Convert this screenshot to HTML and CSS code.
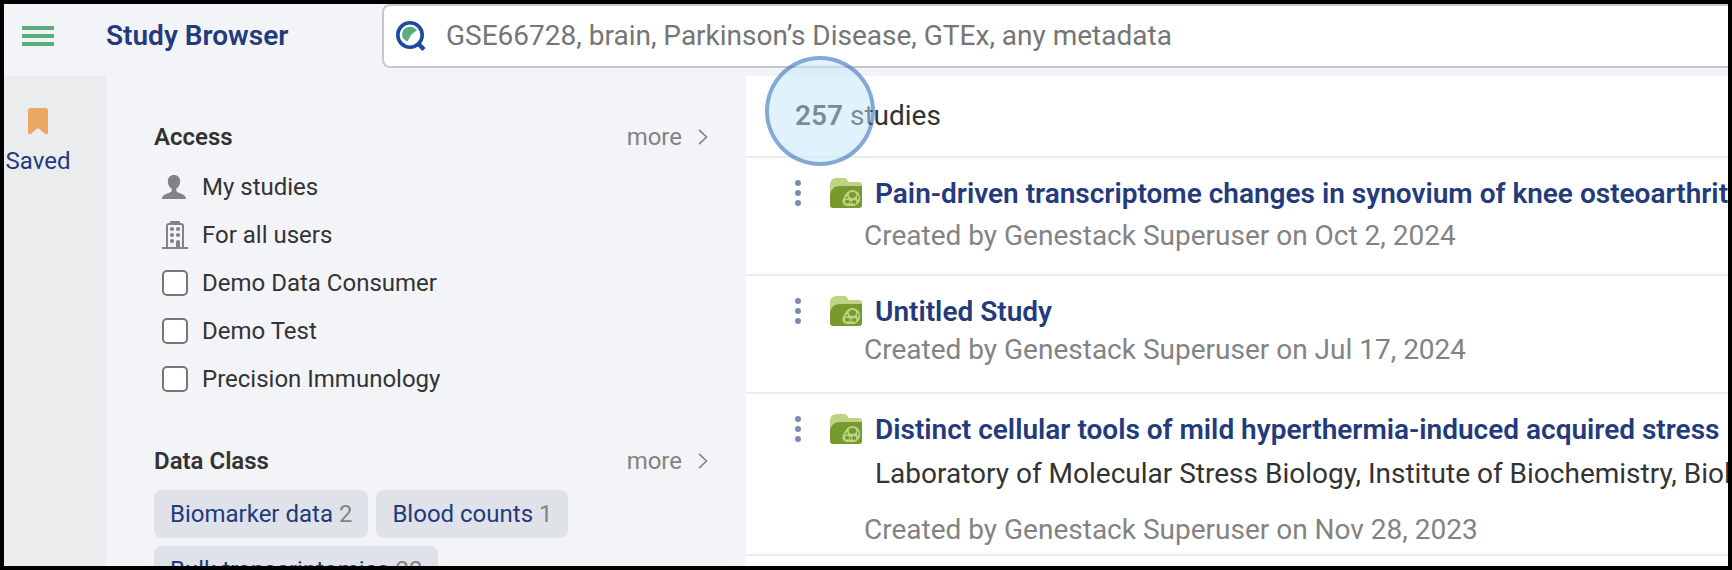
FILE: index.html
```html
<!DOCTYPE html>
<html lang="en">
<head>
<meta charset="utf-8">
<title>Study Browser</title>
<link rel="stylesheet" href="styles.css">
</head>
<body>
<svg class="sprite" aria-hidden="true">
  <symbol id="folder" viewBox="0 0 32 30">
    <path fill="#bdd583" d="M0 6a6 6 0 0 1 6-6h8c2 0 3 1 4 3 .5 .8 1 1 2 1h9a3 3 0 0 1 3 3v18H0z"/>
    <path fill="#769a2e" d="M0 18C0 12 4 8 10 8h22v19a3 3 0 0 1-3 3H3a3 3 0 0 1-3-3z"/>
    <path fill="#bdd583" d="M22.500 12c4.500 0 7.700 3.600 7.700 8.200 0 4.600-3.400 7.800-8 7.800h-4c-3.600 0-5.800-2-5.800-4.800 0-2.200 1.300-3.200 2.300-5.200 1.400-3.200 4-6 7.800-6z"/>
    <ellipse fill="#769a2e" cx="22.500" cy="17" rx="3.700" ry="2.900"/>
    <ellipse fill="#769a2e" cx="17.200" cy="23.700" rx="2.200" ry="1.900"/>
    <ellipse fill="#769a2e" cx="24.200" cy="24" rx="2.200" ry="2"/>
    <path fill="none" stroke="#769a2e" stroke-width="1.500" stroke-linecap="round" d="M27.800 18v3M16.200 20.300l1-1.200M20.600 23.500v1.500"/>
  </symbol>
  <symbol id="dots" viewBox="0 0 6 26">
    <g fill="#7b8bb5"><circle cx="3" cy="3" r="3"/><circle cx="3" cy="13" r="3"/><circle cx="3" cy="23" r="3"/></g>
  </symbol>
  <symbol id="chevron" viewBox="0 0 10 16">
    <path fill="none" stroke="#838383" stroke-width="1.600" d="M1 .8l7.500 7.200L1 15.200"/>
  </symbol>
</svg>
<div class="app">
  <header class="header">
    <button class="menu" type="button" aria-label="Menu">
      <svg width="32" height="20" viewBox="0 0 32 20"><path fill="#5dac80" d="M0 0h32v4H0zM0 8h32v4H0zM0 16h32v4H0z"/></svg>
    </button>
    <h1 class="brand">Study Browser</h1>
    <label class="search">
      <svg width="30" height="31" viewBox="0 0 30 31" aria-hidden="true">
        <circle cx="14" cy="14" r="12.200" fill="#fff" stroke="#1d4b9d" stroke-width="3.600"/>
        <path d="M23 23.500l5 5" stroke="#1d4b9d" stroke-width="4.400"/>
        <path fill="#5dac80" d="M20.800 9.600c-2.600 1.700-4.800 3.200-6.300 5.400-1 1.600-1.400 3.600-3.200 5.200C7.600 19 5.800 15.600 6.200 12.400 7 7.600 11 5.600 14.600 5.800c2.800.2 5 1.600 6.200 3.800z"/>
      </svg>
      <input class="search-input" type="text" aria-label="Search studies" placeholder="GSE66728, brain, Parkinson’s Disease, GTEx, any metadata">
    </label>
  </header>
  <div class="content">
    <nav class="rail">
      <a class="saved" href="#saved">
        <svg width="20" height="27" viewBox="0 0 20 27" aria-hidden="true"><path fill="#e9a962" d="M3 0h14a3 3 0 0 1 3 3v21.500c0 1.600-1.600 2.300-3 1.300L10 20l-7 5.800c-1.400 1-3 .3-3-1.300V3a3 3 0 0 1 3-3z"/></svg>
        Saved
      </a>
    </nav>
    <aside class="filters">
      <section class="filter">
        <div class="filter-head">
          <h2 class="filter-title">Access</h2>
          <button class="more" type="button">more <svg width="10" height="16"><use href="#chevron"/></svg></button>
        </div>
        <ul class="options">
          <li><button class="option" type="button">
            <span class="option-icon"><svg width="24" height="24" viewBox="0 0 24 24"><path fill="#838383" d="M12 0c3.800 0 6.200 2.600 6.200 6.400 0 3-1.600 6-3.800 7.200v2.200c0 1.200 1 1.500 3 2.200 3.600 1.200 6.600 2.600 6.600 6H0c0-3.400 3-4.800 6.600-6 2-.7 3-1 3-2.200v-2.200C7.400 12.400 5.800 9.400 5.800 6.400 5.800 2.600 8.200 0 12 0z"/></svg></span>
            My studies</button></li>
          <li><button class="option" type="button">
            <span class="option-icon"><svg width="26" height="28" viewBox="0 0 26 28"><path fill="none" stroke="#838383" stroke-width="2" d="M0 27h26M5 27V5a2 2 0 0 1 2-2h12a2 2 0 0 1 2 2v22"/><path fill="#838383" d="M9 0h8a1 1 0 0 1 1 1v3H8V1a1 1 0 0 1 1-1zM14 21a2 2 0 0 1 4 0v6h-4z"/><g fill="#838383"><circle cx="10" cy="8" r="2.100"/><circle cx="16" cy="8" r="2.100"/><circle cx="10" cy="14" r="2.100"/><circle cx="16" cy="14" r="2.100"/><circle cx="10" cy="20" r="2.100"/></g></svg></span>
            For all users</button></li>
          <li><label class="option"><input class="check" type="checkbox">Demo Data Consumer</label></li>
          <li><label class="option"><input class="check" type="checkbox">Demo Test</label></li>
          <li><label class="option"><input class="check" type="checkbox">Precision Immunology</label></li>
        </ul>
      </section>
      <section class="filter">
        <div class="filter-head">
          <h2 class="filter-title">Data Class</h2>
          <button class="more" type="button">more <svg width="10" height="16"><use href="#chevron"/></svg></button>
        </div>
        <div class="chips">
          <button class="chip" type="button">Biomarker data <span class="chip-count">2</span></button>
          <button class="chip" type="button">Blood counts <span class="chip-count">1</span></button>
          <button class="chip" type="button">Bulk transcriptomics <span class="chip-count">22</span></button>
        </div>
      </section>
    </aside>
    <main class="results">
      <p class="total"><b>257</b> studies<span class="pointer"></span></p>
      <article class="study">
        <button class="study-menu" type="button" aria-label="Study actions"><svg width="6" height="26"><use href="#dots"/></svg></button>
        <svg class="study-icon" width="32" height="30"><use href="#folder"/></svg>
        <div class="study-body">
          <a class="study-title" href="#study-1">Pain-driven transcriptome changes in synovium of knee osteoarthritis</a>
          <p class="study-meta loose">Created by Genestack Superuser on Oct 2, 2024</p>
        </div>
      </article>
      <article class="study">
        <button class="study-menu" type="button" aria-label="Study actions"><svg width="6" height="26"><use href="#dots"/></svg></button>
        <svg class="study-icon" width="32" height="30"><use href="#folder"/></svg>
        <div class="study-body">
          <a class="study-title" href="#study-2">Untitled Study</a>
          <p class="study-meta">Created by Genestack Superuser on Jul 17, 2024</p>
        </div>
      </article>
      <article class="study">
        <button class="study-menu" type="button" aria-label="Study actions"><svg width="6" height="26"><use href="#dots"/></svg></button>
        <svg class="study-icon" width="32" height="30"><use href="#folder"/></svg>
        <div class="study-body">
          <a class="study-title" href="#study-3">Distinct cellular tools of mild hyperthermia-induced acquired stress</a>
          <p class="study-lab">Laboratory of Molecular Stress Biology, Institute of Biochemistry, Biological</p>
          <p class="study-meta">Created by Genestack Superuser on Nov 28, 2023</p>
        </div>
      </article>
    </main>
  </div>
</div>
</body>
</html>
```
FILE: styles.css
```css
* {
  box-sizing: border-box;
}

body,
h1,
h2,
p,
ul {
  margin: 0;
  padding: 0;
}

body {
  font-family: Roboto, "Liberation Sans", sans-serif;
  font-size: 28px;
  line-height: 32px;
  color: #333;
}

button {
  border: 0;
  padding: 0;
  background: none;
  color: inherit;
  font: inherit;
}

a {
  text-decoration: none;
}

svg {
  display: block;
  flex: none;
}

.sprite {
  position: absolute;
  width: 0;
  height: 0;
}

.app {
  display: flex;
  flex-direction: column;
  height: 100vh;
  overflow: hidden;
  border: 4px solid #000;
  background: #f3f4f7;
}

/* Header */

.header {
  display: flex;
  align-items: center;
  flex: none;
  padding-bottom: 8px;
}

.menu {
  width: 102px;
  padding-left: 18px;
}

.brand {
  width: 276px;
  font-size: 28px;
  font-weight: 600;
  color: #233a7c;
}

.search {
  display: flex;
  flex: 1;
  align-items: center;
  gap: 20px;
  height: 64px;
  padding-left: 12px;
  border: 2px solid #c5c7d0;
  border-right: 0;
  border-radius: 8px 0 0 8px;
  background: #fff;
}

.search-input {
  flex: 1;
  min-width: 0;
  border: 0;
  padding: 0;
  outline: 0;
  background: none;
  font: inherit;
}

.search-input::placeholder {
  color: #757575;
  opacity: 1;
}

/* Columns */

.content {
  display: flex;
  flex: 1;
  min-height: 0;
}

.rail {
  flex: none;
  width: 102px;
  padding: 32px 0 0 2px;
  background: #ebecee;
}

.saved {
  display: flex;
  flex-direction: column;
  align-items: center;
  gap: 12px;
  width: 64px;
  font-size: 24px;
  line-height: 28px;
  color: #233a7c;
}

/* Filters */

.filters {
  display: flex;
  flex: none;
  flex-direction: column;
  gap: 44px;
  width: 640px;
  padding: 47px 38px 0 48px;
  font-size: 24px;
  line-height: 28px;
}

.filter-head {
  display: flex;
  align-items: center;
  justify-content: space-between;
}

.filter-title {
  font-size: 24px;
  font-weight: 600;
}

.more {
  display: flex;
  align-items: center;
  gap: 16px;
  color: #838383;
}

.options {
  margin-top: 12px;
  list-style: none;
}

.option {
  display: flex;
  align-items: center;
  gap: 14px;
  height: 48px;
  padding-left: 8px;
}

.option-icon {
  width: 26px;
}

.check {
  flex: none;
  width: 26px;
  height: 26px;
  margin: 0;
  appearance: none;
  border: 2px solid #767676;
  border-radius: 5px;
  background: #fff;
}

.check:checked {
  background: #233a7c;
}

.chips {
  display: flex;
  flex-wrap: wrap;
  gap: 8px;
  margin-top: 15px;
}

.chip {
  height: 48px;
  padding: 0 16px;
  border-radius: 8px;
  background: #dfe2e8;
  color: #233a7c;
}

.chip-count {
  color: #838383;
}

/* Results */

.results {
  flex: 1;
  min-width: 0;
  background: #fff;
}

.total {
  position: relative;
  padding: 24px 0 24px 49px;
  border-bottom: 2px solid #ebecee;
}

.total b {
  font-weight: 600;
}

.pointer {
  position: absolute;
  top: -20px;
  left: 19px;
  width: 110px;
  height: 110px;
  border: 4px solid rgba(50, 112, 188, 0.6);
  border-radius: 50%;
  background: rgba(193, 231, 251, 0.5);
  background-clip: padding-box;
  pointer-events: none;
}

.study {
  display: flex;
  align-items: flex-start;
  min-height: 118px;
  padding: 20px 0 8px 49px;
  border-bottom: 2px solid #ebecee;
}

.study-menu {
  padding: 2px 0;
}

.study-icon {
  margin: 0 2px 0 29px;
}

.study-body {
  flex: 1;
  min-width: 0;
  overflow: hidden;
  white-space: nowrap;
}

.study-title {
  display: block;
  padding-left: 11px;
  font-weight: 600;
  color: #233a7c;
}

.study-lab {
  margin-top: 12px;
  padding-left: 11px;
}

.study-meta {
  margin-top: 6px;
  color: #838383;
}

.study-meta.loose {
  margin-top: 10px;
}

.study-lab + .study-meta {
  margin-top: 24px;
}
```
